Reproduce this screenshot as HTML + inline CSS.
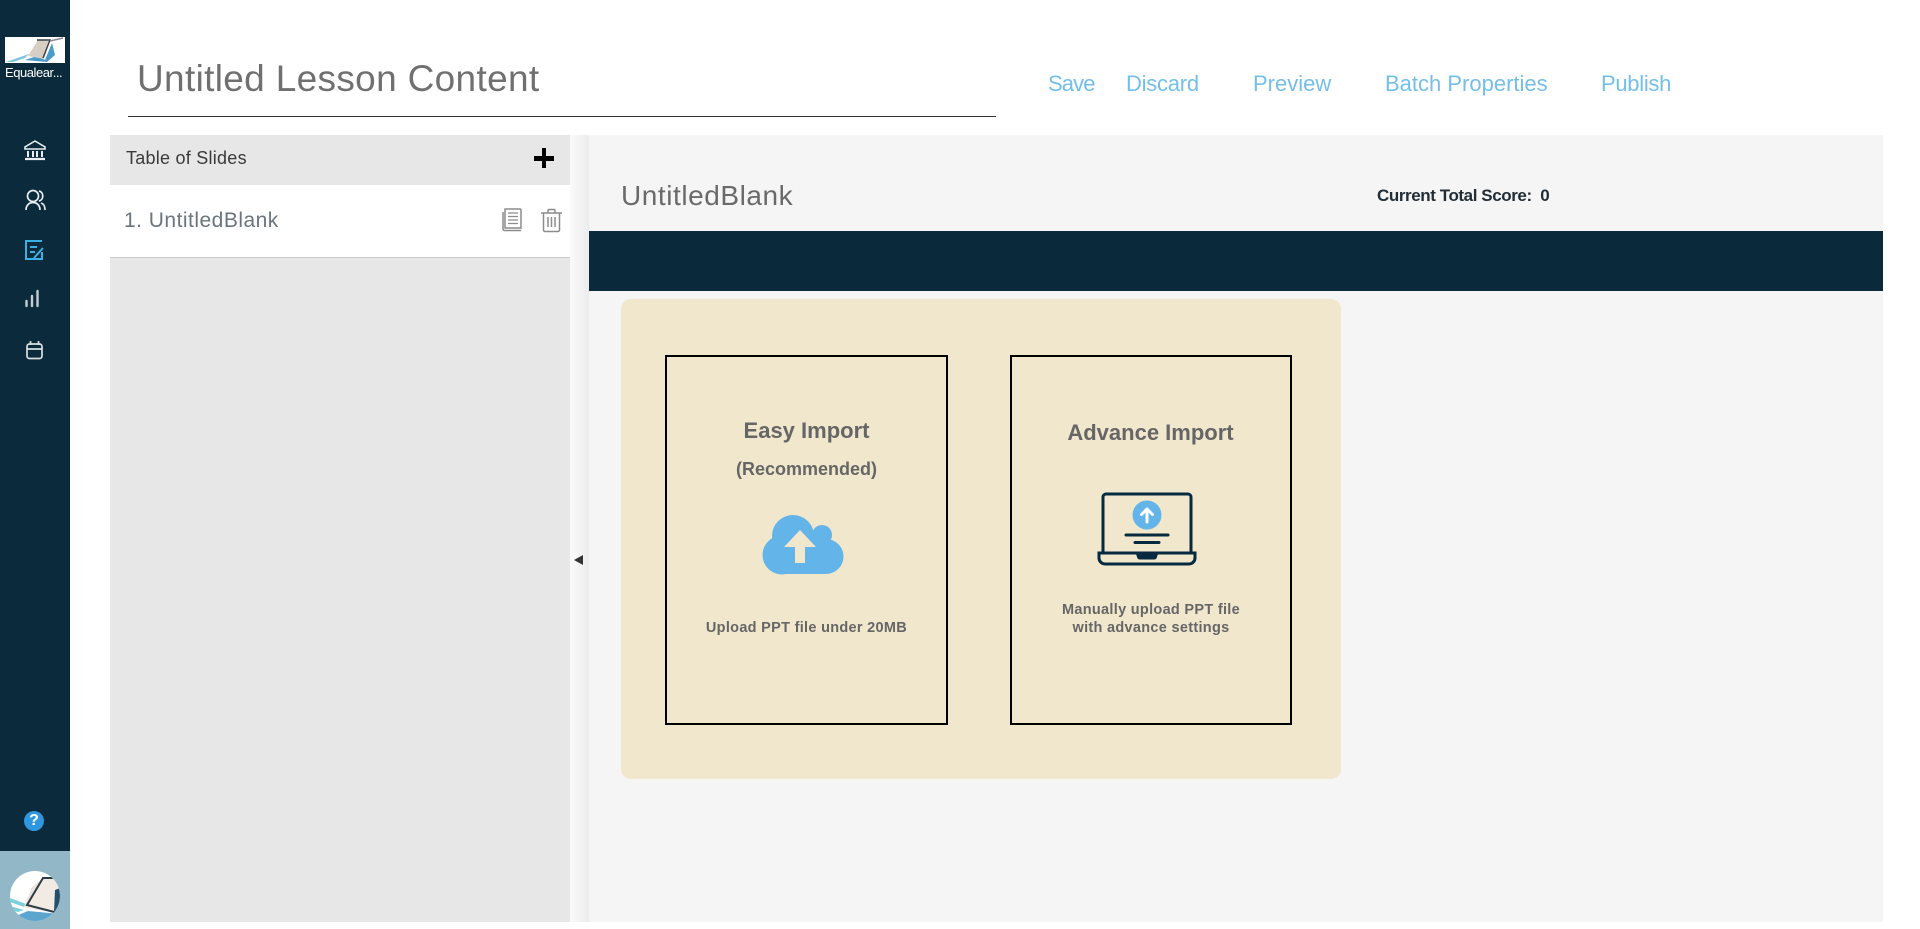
<!DOCTYPE html>
<html><head><meta charset="utf-8"><title>Untitled Lesson Content</title>
<style>
html,body{margin:0;padding:0;width:1920px;height:929px;overflow:hidden;background:#fff;font-family:"Liberation Sans",sans-serif}
.a{position:absolute}
.t{position:absolute;white-space:nowrap;line-height:1}
.nav{position:absolute;color:#74bfea;font-size:22px;top:72px;white-space:nowrap;line-height:24px}
.b{font-weight:700;color:#666;text-align:center;left:0;right:0}
</style></head><body>
<div class="a" style="left:0;top:0;width:70px;height:929px;background:#0b2a3b"></div>
<svg class="a" style="left:5px;top:37px" width="60" height="26" viewBox="0 0 60 26"><rect width="60" height="26" fill="#fff"/><path d="M1 25L24 17L20 21L8 25Z" fill="#7cc4dc"/><path d="M20 23L32 19L40 23L47 6L50 18L42 25Z" fill="#4a9bc9"/><path d="M23 19L33 3L45 4L39 22Z" fill="#d8cfc4"/><path d="M32 3L45 3L38 21" fill="none" stroke="#3a3f45" stroke-width="1.4"/><path d="M45 4L58 1" stroke="#889" stroke-width="1.5"/></svg>
<div class="t" style="left:5px;top:66px;color:#fff;font-size:13px;letter-spacing:-.45px;width:62px">Equalear...</div>
<svg class="a" style="left:0;top:130px" width="70" height="240" viewBox="0 130 70 240" fill="none" stroke="#e8eef1" stroke-width="1.700">
<path d="M35 141L45 147V149H25V147Z" stroke-width="1.600" fill="none"/><path d="M28 151v6M33 151v6M37 151v6M42 151v6" stroke-width="2"/><path d="M25 159h20" stroke-width="2.200"/>
<circle cx="33" cy="196" r="5.500"/><path d="M26 210c0-10 14-10 14 0"/><path d="M39 191c5 1 5 9 0 10M41 203c3 1 4 3 4 7"/>
<path d="M42 241H26V259H42V252" stroke="#3cb0e2" stroke-width="2"/><path d="M30 247h7M30 252h5" stroke="#3cb0e2" stroke-width="2"/><path d="M34 258l9-10" stroke="#3cb0e2" stroke-width="2"/>
<path d="M26.500 301v5M32 296v10M37.500 291v15" stroke="#c3ccd1" stroke-width="2.400" stroke-linecap="round"/>
<rect x="27" y="344" width="15" height="14.500" rx="2.500" stroke="#d8e0e4"/><path d="M27 349h15M30.500 341v4M38.500 341v4" stroke="#d8e0e4"/>
</svg>
<div class="a" style="left:24px;top:811px;width:20px;height:20px;border-radius:50%;background:#2f97e0;color:#fff;font-weight:700;font-size:16px;line-height:20px;text-align:center">?</div>
<div class="a" style="left:0;top:851px;width:70px;height:78px;background:#92b8c8"></div>
<svg class="a" style="left:10px;top:871px" width="50" height="50" viewBox="0 0 50 50"><circle cx="25" cy="25" r="25" fill="#fff"/><clipPath id="c"><circle cx="25" cy="25" r="25"/></clipPath><g clip-path="url(#c)"><path d="M0 27L16 33L14 36L0 31ZM0 35L14 39L8 41L0 39Z" fill="#7cd0de"/><path d="M6 45L18 40L50 43V50H10Z" fill="#4a9bc9" opacity=".9"/><path d="M14 36L22 16L33 7L50 7V42L28 39Z" fill="#ebe4db"/><path d="M33 8H50V41L19 33Z" fill="#f1ebe4"/><path d="M45 19L50 17V42L44 41Z" fill="#24506c"/><path d="M50 7H33L17 34L48 42" fill="none" stroke="#2d3c48" stroke-width="2"/></g></svg>

<div class="t" style="left:137px;top:60px;font-size:37px;color:#707070;letter-spacing:.33px">Untitled Lesson Content</div>
<div class="a" style="left:128px;top:116px;width:868px;height:1px;background:#333"></div>
<div class="nav" style="left:1048px;letter-spacing:-.9px">Save</div>
<div class="nav" style="left:1126px;letter-spacing:-.25px">Discard</div>
<div class="nav" style="left:1253px">Preview</div>
<div class="nav" style="left:1385px">Batch Properties</div>
<div class="nav" style="left:1601px;letter-spacing:-.3px">Publish</div>

<div class="a" style="left:110px;top:135px;width:460px;height:787px;background:#e7e7e7"></div>
<div class="t" style="left:126px;top:149px;font-size:18px;color:#3a3a3a;letter-spacing:.25px">Table of Slides</div>
<div class="a" style="left:534px;top:156px;width:20px;height:4.500px;background:#000"></div>
<div class="a" style="left:541.500px;top:148px;width:4.500px;height:20px;background:#000"></div>
<div class="a" style="left:110px;top:185px;width:460px;height:72px;background:#fff;border-bottom:1px solid #ccc;box-sizing:content-box"></div>
<div class="t" style="left:124px;top:210px;font-size:21px;color:#6a757e;letter-spacing:.48px">1. UntitledBlank</div>
<svg class="a" style="left:500px;top:207px" width="66" height="27" viewBox="500 207 66 27" fill="none" stroke="#8c8c8c" stroke-width="1.500">
<path d="M505 209h15a1 1 0 0 1 1 1v18h-16z" fill="#fff"/><path d="M503 212v17a1.500 1.500 0 0 0 1.500 1.500h16.500"/><path d="M508 213h10M508 216.500h10M508 220h10M508 223.500h10" stroke-width="1.300"/>
<path d="M541 213h21M548 213v-2.500a1 1 0 0 1 1-1h5a1 1 0 0 1 1 1V213"/><path d="M543.500 213v17a1.500 1.500 0 0 0 1.500 1.500h13a1.500 1.500 0 0 0 1.500-1.500v-17"/><path d="M548 217v10M551.500 217v10M555 217v10" stroke-width="1.500"/>
</svg>

<div class="a" style="left:570px;top:135px;width:19px;height:787px;background:linear-gradient(to right,#fafafa,#ececec)"></div>
<div class="a" style="left:574px;top:555px;width:0;height:0;border-top:5px solid transparent;border-bottom:5px solid transparent;border-right:9px solid #333"></div>
<div class="a" style="left:589px;top:135px;width:1294px;height:787px;background:#f5f5f5"></div>
<div class="t" style="left:621px;top:182px;font-size:28px;color:#6a6a6a;letter-spacing:.55px">UntitledBlank</div>
<div class="t" style="left:1377px;top:187px;font-size:17px;font-weight:700;color:#222d35;letter-spacing:-.42px;white-space:pre">Current Total Score:  0</div>
<div class="a" style="left:589px;top:231px;width:1294px;height:60px;background:#0a2a3c"></div>
<div class="a" style="left:621px;top:299px;width:720px;height:480px;border-radius:10px;background:#f1e7cd"></div>

<div class="a" style="left:665px;top:355px;width:283px;height:370px;box-sizing:border-box;border:2px solid #000">
<div class="t b" style="top:63px;font-size:22px;height:25px">Easy Import</div>
<div class="t b" style="top:103px;font-size:18px">(Recommended)</div>
<div class="t b" style="top:264px;font-size:14.500px;letter-spacing:.3px">Upload PPT file under 20MB</div>
</div>
<svg class="a" style="left:760px;top:513px" width="86" height="63" viewBox="760 513 86 63"><g fill="#63b4e8"><circle cx="793" cy="536" r="21"/><circle cx="822" cy="535" r="10"/><circle cx="782" cy="555" r="19.500"/><circle cx="826" cy="556.500" r="17.500"/><rect x="782" y="540" width="44" height="34"/></g><path d="M800 530L816 547H805V563H795V547H784Z" fill="#f1e7cd"/></svg>

<div class="a" style="left:1010px;top:355px;width:282px;height:370px;box-sizing:border-box;border:2px solid #000">
<div class="t b" style="top:65px;font-size:22px;height:25px;padding-right:1px">Advance Import</div>
<div class="t b" style="top:246px;font-size:14.500px;letter-spacing:.3px">Manually upload PPT file</div>
<div class="t b" style="top:264px;font-size:14.500px;letter-spacing:.3px">with advance settings</div>
</div>
<svg class="a" style="left:1095px;top:490px" width="104" height="78" viewBox="1095 490 104 78" fill="none" stroke="#062a3f">
<path d="M1103 553V497a3 3 0 0 1 3-3h82a3 3 0 0 1 3 3v56" stroke-width="3"/>
<path d="M1099 553h96v5a6 6 0 0 1-6 6h-84a6 6 0 0 1-6-6z" stroke-width="3"/>
<path d="M1136 554h22l-1 3a3 3 0 0 1-3 2.500h-14a3 3 0 0 1-3-2.500z" fill="#062a3f" stroke="none"/>
<circle cx="1147" cy="515" r="14.500" fill="#63b4e8" stroke="none"/>
<path d="M1147 522V510M1141.500 514.500l5.500-5.500 5.500 5.500" stroke="#fff" stroke-width="3" stroke-linecap="round" stroke-linejoin="round"/>
<path d="M1126 535h42M1135 542.500h24" stroke-width="3" stroke-linecap="round"/>
</svg>
</body></html>
